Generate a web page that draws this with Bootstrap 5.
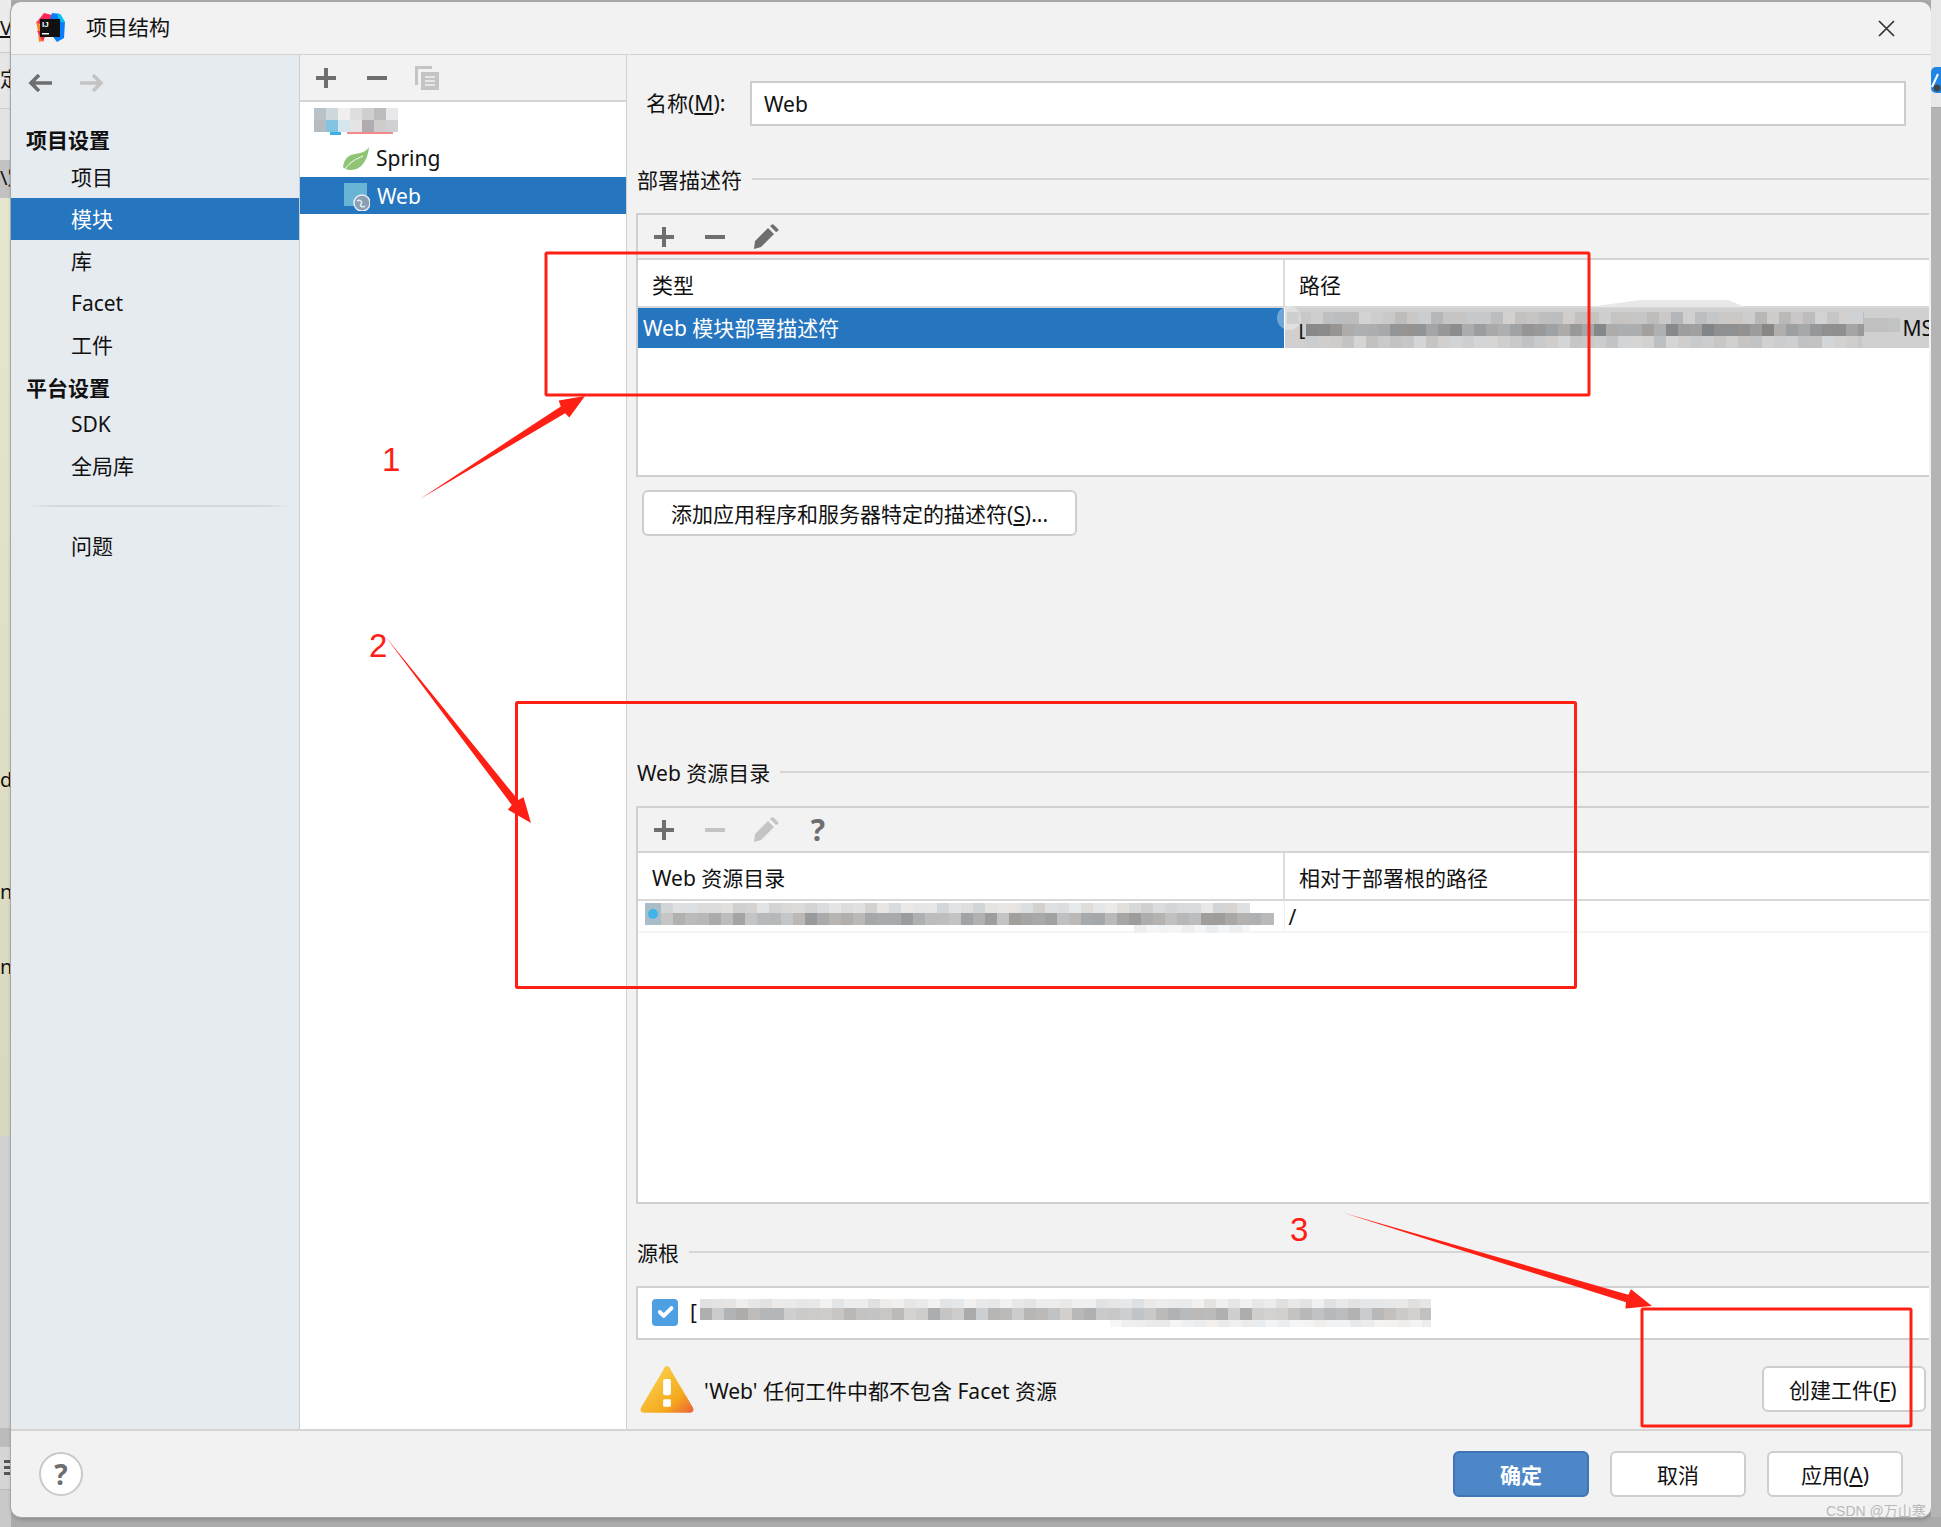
<!DOCTYPE html>
<html lang="zh-CN">

<head>
    <meta charset="UTF-8">
    <meta name="viewport" content="width=device-width, initial-scale=1.0">
    <title>项目结构</title>
    <link href="https://cdn.jsdelivr.net/npm/bootstrap@5.3.0/dist/css/bootstrap.min.css" rel="stylesheet">
    <style>
        body { margin: 0; overflow: hidden; background: #ababab; color: #111; font: 21px/1.3 "Noto Sans", "Noto Sans CJK SC", sans-serif; }
        .stage { width: 1941px; height: 1527px; overflow: hidden; position: relative; }

        /* the windows behind the dialog */
        .back-left { width: 11px; height: 1527px; overflow: hidden; white-space: nowrap; line-height: 28px; font-size: 20px; }
        .back-left > div { overflow: hidden; }
        .bl-a { height: 53px; background: #ececec; border-bottom: 1px solid #c9c9c9; padding-top: 14px; }
        .bl-b { height: 56px; background: #e6e6e6; border-bottom: 1px solid #cfcfcf; padding-top: 13px; }
        .bl-c { height: 51px; background: #e4e4e4; }
        .bl-d { height: 38px; background: #c2c2c2; padding-top: 4px; }
        .bl-e { height: 938px; background: linear-gradient(#e7e7cf, #d8d8be); padding-top: 568px; }
        .bl-e span { display: block; height: 28px; }
        .bl-e .gap1 { margin-top: 84px; }
        .bl-e .gap2 { margin-top: 47px; }
        .bl-f { height: 292px; background: #d2d2d2; }
        .bl-g { height: 19px; background: #bcbcbc; }
        .bl-h { height: 43px; background: #d6d6d6; border-bottom: 1px solid #b9b9b9; padding: 13px 0 0 4px; }
        .bl-h i { display: block; width: 7px; height: 16px; background: repeating-linear-gradient(#555 0 3px, transparent 3px 6px); }
        .bl-i { height: 37px; background: #c9c9c9; }
        .back-right { width: 10px; }
        .br-a { height: 108px; background: #e8e8e8; border-bottom: 1px solid #a9a9a9; padding-top: 67px; }
        .br-b { height: 1409px; background: #b4b4b4; }

        .dlg { width: 1920px; height: 1515px; margin-top: 2px; background: #f2f2f2; border-radius: 10px; overflow: hidden; box-shadow: 0 0 0 1px #a6a6a6, 1px 2px 5px rgba(0, 0, 0, .25); }
        .title-bar { height: 53px; border-bottom: 1px solid #d3d3d3; padding-left: 24px; }
        .title-bar .title-text { margin-left: 21px; }
        .close-x { margin-left: auto; margin-right: 36px; }
        .main-area { height: 1374px; }

        .side-col { width: 289px; background: #e6ebf0; border-right: 1px solid #c9ced3; }
        .nav-row { height: 56px; padding-left: 17px; gap: 28px; }
        .set-head { height: 36px; margin-top: 11px; margin-bottom: -2px; padding-left: 15px; font-weight: 700; line-height: 36px; color: #111; }
        .set-head.second { margin-top: 4px; margin-bottom: -3px; }
        .nav-pills .set-item { height: 42px; padding: 0 0 0 60px; line-height: 42px; color: #111; border-radius: 0; }
        .nav-pills .set-item.active { background: #2675bf; color: #fff; }
        .side-rule { height: 2px; margin: 18px 6px 18px 14px; background: linear-gradient(90deg, #e6ebf0, #d5d7da 12%, #d5d7da 88%, #e6ebf0); }

        .tree-col { width: 327px; background: #fff; border-right: 1px solid #cfcfcf; }
        .tree-tools { height: 47px; background: #f2f2f2; border-bottom: 2px solid #d4d4d4; padding-left: 16px; gap: 31px; }
        .tree-tools .copy-icon { margin-left: -3px; }
        .tree-blank { height: 41px; }
        .tree-row { height: 34px; padding: 0 0 2px 43px; gap: 7px; }
        .tree-row.web-row { height: 37px; padding: 2px 0 0 44px; background: #2675bf; color: #fff; }

        .form-col { width: 1304px; padding: 0 2px 0 10px; }
        .name-row { margin: 26px 22px 0 9px; gap: 20px; }
        .name-row label { flex: none; width: 84px; white-space: nowrap; }
        .name-row .form-control { height: 45px; width: 1156px; flex: none; border: 2px solid #cdcdcd; border-radius: 0; padding: 0 12px; font: inherit; color: #111; }
        .sec-title { height: 30px; line-height: 30px; gap: 10px; }
        .sec-title hr { flex: 1; margin: -2px 0 0; border: 0; border-top: 2px solid #d6d6d6; opacity: 1; }
        .sec-one { margin-top: 39px; }
        .sec-two { margin-top: 222px; }
        .sec-three { margin-top: 34px; }

        .desc-box { margin: 18px 0 0 -1px; background: #fff; border: 2px solid #d0d0d0; border-right: 0; }
        .box-one { height: 264px; }
        .box-two { height: 398px; }
        .box-tools { height: 45px; background: #f2f2f2; border-bottom: 2px solid #d4d4d4; padding-left: 16px; gap: 31px; }
        .box-tools .edit-icon { margin-left: -3px; }
        .box-tools .ask { width: 20px; margin-left: -2px; font-weight: 700; font-size: 30px; line-height: 1; color: #6e6e6e; text-align: center; }

        .res-table { table-layout: fixed; width: 1291px; margin: 0; --bs-table-bg: transparent; color: inherit; }
        .res-table th, .res-table td { border: 0; padding: 0; font-weight: 400; vertical-align: middle; white-space: nowrap; overflow: hidden; box-shadow: none; }
        .res-table th { height: 47px; padding: 5px 0 0 14px; border-bottom: 2px solid #d8d8d8; }
        .res-table th + th { padding-left: 14px; border-left: 2px solid #dcdcdc; }
        .res-table .pick { height: 41px; padding: 2px 0 0 5px; background: #2675bf; color: #fff; border-right: 1px solid #fff; }
        .res-table .pick-path { background: #d0d0d0; padding: 2px 0 0 14px; }
        .res-table .path-end { margin-right: -4px; }
        .res-table .dir-row { height: 29px; border-bottom: 2px solid #f5f5f5; }
        .res-table .dir-slash { padding: 3px 0 0 4px; border-left: 1px solid #efefef; }

        .ide-btn { display: block; padding: 3px 0 0; background: #fff; border: 2px solid #cecece; border-radius: 6px; color: #111; font: inherit; }
        .ide-btn:hover { background: #fff; border-color: #cecece; color: #111; }
        .add-btn { width: 435px; height: 46px; margin: 13px 0 0 5px; }
        .src-box { height: 54px; margin: 18px 0 0 -1px; padding-left: 13px; gap: 12px; background: #fff; border: 2px solid #d0d0d0; border-right: 0; }
        .src-box .form-check-input { width: 26px; height: 27px; margin: -2px 0 0 1px; border: 0; border-radius: 4px; opacity: 1; }
        .src-box .form-check-input:checked { background-color: #4f9fe3; }
        .warn-row { margin-top: 26px; height: 46px; padding: 0 3px 0 3px; }
        .warn-row .warn-text { margin-left: 10px; padding-top: 6px; }
        .warn-row .ide-btn { margin-left: auto; width: 164px; height: 46px; padding-left: 25px; text-align: left; }

        .foot-row { height: 88px; border-top: 2px solid #d4d4d4; padding: 20px 28px 0 28px; gap: 21px; align-items: flex-start; }
        .help-btn { width: 44px; height: 44px; padding: 0; margin-top: 1px; margin-right: auto; background: #fff; border: 2px solid #c9c9c9; color: #6e6e6e; font-weight: 700; font-size: 28px; line-height: 1; }
        .help-btn:hover { background: #fff; border-color: #c9c9c9; color: #6e6e6e; }
        .foot-btn { width: 136px; height: 46px; }
        .ok-btn { background: #4e87c7; border-color: #3f74b5; color: #fff; font-weight: 700; }
        .ok-btn:hover { background: #4e87c7; border-color: #3f74b5; color: #fff; }

        .marks { position: absolute; left: 0; top: 0; pointer-events: none; }
        .marks text { font-family: "Liberation Sans", sans-serif; }
    </style>
</head>

<body>
    <div class="stage d-flex">
        <div class="back-left">
            <div class="bl-a"><u>V</u></div>
            <div class="bl-b">定</div>
            <div class="bl-c"></div>
            <div class="bl-d">\定</div>
            <div class="bl-e"><span>d.</span><span class="gap1">nl</span><span class="gap2">n</span></div>
            <div class="bl-f"></div>
            <div class="bl-g"></div>
            <div class="bl-h"><i></i></div>
            <div class="bl-i"></div>
        </div>

        <div class="dlg d-flex flex-column">
            <div class="title-bar d-flex align-items-center">
                <svg width="30" height="30" viewBox="0 0 30 30">
                    <polygon points="9,0 17,2 14,14 1,10" fill="#fe2857" />
                    <polygon points="1,8 9,16 8,28 4,29 3,18" fill="#fc801d" />
                    <polygon points="2,18 12,18 8,29" fill="#fe2857" />
                    <polygon points="17,0 25,1 30,9 29,25 22,29 12,16" fill="#087cfa" />
                    <polygon points="22,0 26,2 30,10 24,8" fill="#07c3f2" />
                    <rect x="5" y="6" width="20" height="18" fill="#111" />
                    <text x="7" y="14" font-size="8" font-weight="700" fill="#fff" font-family="Liberation Sans">IJ</text>
                    <rect x="7" y="20" width="7" height="1.5" fill="#fff" />
                </svg>
                <span class="title-text">项目结构</span>
                <svg class="close-x" width="17" height="17" viewBox="0 0 17 17"><path d="M1 1l15 15M16 1L1 16" stroke="#333" stroke-width="1.7" fill="none" /></svg>
            </div>

            <div class="main-area d-flex">
                <div class="side-col">
                    <div class="nav-row d-flex align-items-center">
                        <svg width="24" height="18" viewBox="0 0 24 18"><path d="M24 9H3M11 1L3 9l8 8" stroke="#6e6e6e" stroke-width="3.6" fill="none" /></svg>
                        <svg width="25" height="18" viewBox="0 0 25 18"><path d="M0 9h21M13 1l8 8-8 8" stroke="#c4c4c4" stroke-width="3.6" fill="none" /></svg>
                    </div>
                    <div class="set-head">项目设置</div>
                    <nav class="nav nav-pills flex-column">
                        <a class="nav-link set-item" href="#">项目</a>
                        <a class="nav-link set-item active" href="#">模块</a>
                        <a class="nav-link set-item" href="#">库</a>
                        <a class="nav-link set-item" href="#">Facet</a>
                        <a class="nav-link set-item" href="#">工件</a>
                    </nav>
                    <div class="set-head second">平台设置</div>
                    <nav class="nav nav-pills flex-column">
                        <a class="nav-link set-item" href="#">SDK</a>
                        <a class="nav-link set-item" href="#">全局库</a>
                    </nav>
                    <div class="side-rule"></div>
                    <nav class="nav nav-pills flex-column">
                        <a class="nav-link set-item" href="#">问题</a>
                    </nav>
                </div>

                <div class="tree-col">
                    <div class="tree-tools d-flex align-items-center">
                        <svg width="20" height="20" viewBox="0 0 20 20"><path d="M10 0v20M0 10h20" stroke="#6e6e6e" stroke-width="4" /></svg>
                        <svg width="20" height="20" viewBox="0 0 20 20"><path d="M0 10h20" stroke="#6e6e6e" stroke-width="4" /></svg>
                        <svg class="copy-icon" width="24" height="24" viewBox="0 0 24 24"><path d="M0 0h17v3H3v16H0z" fill="#c4c4c4" /><path d="M6 6h18v18H6z" fill="#c4c4c4" /><path d="M10 11h10M10 15h10M10 19h10" stroke="#f2f2f2" stroke-width="1.6" /></svg>
                    </div>
                    <div class="tree-blank"></div>
                    <div class="tree-row d-flex align-items-center">
                        <svg width="26" height="24" viewBox="0 0 26 24"><path d="M26 0C25 12 19 23 8 23 4 23 1 22 0 20 1 12 5 8 12 7 18 6 23 5 26 0z" fill="#8fc475" /><path d="M2 22C7 15 13 12 20 9" stroke="#fff" stroke-width="1" fill="none" /></svg>
                        <span>Spring</span>
                    </div>
                    <div class="tree-row web-row d-flex align-items-center">
                        <svg width="26" height="28" viewBox="0 0 26 28"><rect x="0" y="0" width="23" height="23" fill="#67b4d4" /><circle cx="18" cy="20" r="8" fill="#8a9fb5" stroke="#e9eef3" stroke-width="1.5" /><path d="M13 18c3-2 6 1 4 3s2 4 4 2" stroke="#e9eef3" stroke-width="1.4" fill="none" /></svg>
                        <span>Web</span>
                    </div>
                </div>

                <div class="form-col">
                    <div class="name-row d-flex align-items-center">
                        <label for="module-name">名称(<u>M</u>):</label>
                        <input id="module-name" class="form-control" type="text" value="Web">
                    </div>

                    <div class="sec-title sec-one d-flex align-items-center"><span>部署描述符</span><hr></div>
                    <div class="desc-box box-one">
                        <div class="box-tools d-flex align-items-center">
                            <svg width="20" height="20" viewBox="0 0 20 20"><path d="M10 0v20M0 10h20" stroke="#6e6e6e" stroke-width="4" /></svg>
                            <svg width="20" height="20" viewBox="0 0 20 20"><path d="M0 10h20" stroke="#6e6e6e" stroke-width="4" /></svg>
                            <svg class="edit-icon" width="26" height="25" viewBox="0 0 26 25"><path d="M1 25l1-8L15 4l6 6L8 23zM17 2l2-1.500q1-.5 2 .5l4 4q1 1 0 2l-2 1z" fill="#6e6e6e" /></svg>
                        </div>
                        <table class="table res-table">
                            <colgroup><col style="width: 646px"><col></colgroup>
                            <thead><tr><th>类型</th><th>路径</th></tr></thead>
                            <tbody>
                                <tr>
                                    <td class="pick">Web 模块部署描述符</td>
                                    <td class="pick-path"><div class="d-flex justify-content-between"><span>[</span><span class="path-end">MS</span></div></td>
                                </tr>
                            </tbody>
                        </table>
                    </div>
                    <button type="button" class="btn ide-btn add-btn">添加应用程序和服务器特定的描述符(<u>S</u>)...</button>

                    <div class="sec-title sec-two d-flex align-items-center"><span>Web 资源目录</span><hr></div>
                    <div class="desc-box box-two">
                        <div class="box-tools d-flex align-items-center">
                            <svg width="20" height="20" viewBox="0 0 20 20"><path d="M10 0v20M0 10h20" stroke="#6e6e6e" stroke-width="4" /></svg>
                            <svg width="20" height="20" viewBox="0 0 20 20"><path d="M0 10h20" stroke="#c4c4c4" stroke-width="4" /></svg>
                            <svg class="edit-icon" width="26" height="25" viewBox="0 0 26 25"><path d="M1 25l1-8L15 4l6 6L8 23zM17 2l2-1.500q1-.5 2 .5l4 4q1 1 0 2l-2 1z" fill="#c4c4c4" /></svg>
                            <span class="ask">?</span>
                        </div>
                        <table class="table res-table">
                            <colgroup><col style="width: 646px"><col></colgroup>
                            <thead><tr><th>Web 资源目录</th><th>相对于部署根的路径</th></tr></thead>
                            <tbody>
                                <tr class="dir-row"><td></td><td class="dir-slash">/</td></tr>
                            </tbody>
                        </table>
                    </div>

                    <div class="sec-title sec-three d-flex align-items-center"><span>源根</span><hr></div>
                    <div class="src-box d-flex align-items-center">
                        <input class="form-check-input" type="checkbox" checked aria-label="源根">
                        <span>[</span>
                    </div>
                    <div class="warn-row d-flex align-items-center">
                        <svg width="54" height="49" viewBox="0 0 56 50">
                            <defs><linearGradient id="warnFill" x1="0" y1="0" x2="1" y2="1"><stop offset="0" stop-color="#fbdc5a" /><stop offset=".7" stop-color="#f4a81c" /><stop offset="1" stop-color="#ec5f3c" /></linearGradient></defs>
                            <path d="M28 1c2 0 3 1 4 4l23 39c1 3 0 5-3 5H4c-3 0-4-2-3-5L24 5c1-3 2-4 4-4z" fill="url(#warnFill)" />
                            <rect x="24" y="14" width="8" height="17" rx="2" fill="#fff" />
                            <rect x="24" y="35" width="8" height="8" rx="1.500" fill="#fff" />
                        </svg>
                        <span class="warn-text">'Web' 任何工件中都不包含 Facet 资源</span>
                        <button type="button" class="btn ide-btn">创建工件(<u>F</u>)</button>
                    </div>
                </div>
            </div>

            <div class="foot-row d-flex">
                <button type="button" class="btn rounded-circle help-btn">?</button>
                <button type="button" class="btn ide-btn foot-btn ok-btn">确定</button>
                <button type="button" class="btn ide-btn foot-btn">取消</button>
                <button type="button" class="btn ide-btn foot-btn">应用(<u>A</u>)</button>
            </div>
        </div>

        <div class="back-right">
            <div class="br-a">
                <svg class="d-block" width="10" height="26" viewBox="0 0 10 26"><rect x="0" y="0" width="16" height="26" rx="5" fill="#1f86e6" /><path d="M1 20l6-13" stroke="#fff" stroke-width="2" /><circle cx="6" cy="21" r="3.5" fill="#444" /></svg>
            </div>
            <div class="br-b"></div>
        </div>

        <!-- redaction mosaics and the red review marks sit on top of the dialog -->
        <svg class="marks" id="marks" width="1941" height="1527" viewBox="0 0 1941 1527">
            <g id="mosaics"></g>
            <g fill="none" stroke="#ff2015" stroke-width="3">
                <rect x="546" y="253" width="1043" height="142" rx="1" />
                <rect x="516.500" y="702.500" width="1059" height="285" rx="1" />
                <rect x="1642" y="1309" width="269" height="117" rx="1" />
            </g>
            <g id="arrows" fill="#ff2015"></g>
            <g fill="#ff2015" font-size="33">
                <text x="382" y="471">1</text>
                <text x="369" y="657">2</text>
                <text x="1290" y="1241">3</text>
            </g>
            <text x="1826" y="1516" font-size="14" fill="#b9b9b9" style="font-family: 'Liberation Sans', 'Noto Sans CJK SC', sans-serif">CSDN @万山寒</text>
        </svg>
    </div>

    <script src="https://cdn.jsdelivr.net/npm/bootstrap@5.3.0/dist/js/bootstrap.bundle.min.js"></script>
    <script>
        const NS = 'http://www.w3.org/2000/svg';
        let seed = 71;

        function rnd() {
            seed = (seed * 16807) % 2147483647;
            return seed / 2147483647;
        }

        function shape(parent, tag, attrs) {
            const el = document.createElementNS(NS, tag);
            Object.keys(attrs).forEach(k => el.setAttribute(k, attrs[k]));
            parent.appendChild(el);
            return el;
        }

        // one band of blur cells: gray level is base +/- spread
        function band(x1, x2, y, h, base, spread) {
            const g = document.getElementById('mosaics');
            for (let x = x1; x < x2; x += 12) {
                const v = Math.round(base + (rnd() - 0.5) * spread);
                const tint = Math.round((rnd() - 0.5) * 6);
                shape(g, 'rect', {
                    x: x, y: y, width: Math.min(12, x2 - x), height: h,
                    fill: `rgb(${v + tint},${v},${v - tint})`
                });
            }
        }

        // module name in the tree was blurred by hand, colours read off the picture
        function treeBlur() {
            const g = document.getElementById('mosaics');
            shape(g, 'rect', { x: 330, y: 130, width: 11, height: 5, fill: '#3eb0e6' });
            shape(g, 'rect', { x: 347, y: 132, width: 46, height: 2, fill: '#f28a8a' });
            const rows = [
                ['#b9c2c8', '#cfd8dc', '#f0efee', '#dedede', '#cfcfcf', '#bdbcbd', '#e8e8ea'],
                ['#b4bcc2', '#82c4e2', '#d6e6ee', '#e4e4e4', '#b0abaf', '#d0cccc', '#cfd0d4']
            ];
            rows.forEach((row, r) => row.forEach((c, i) => {
                shape(g, 'rect', { x: 314 + i * 12, y: 108 + r * 12, width: 12, height: 12, fill: c });
            }));
        }

        function pathBlur() {
            const g = document.getElementById('mosaics');
            shape(g, 'polygon', { points: '1589,307 1640,300 1728,300 1745,307', fill: '#e8e8e8' });
            band(1287, 1864, 312, 12, 196, 30);
            band(1306, 1864, 324, 12, 154, 44);
            band(1306, 1862, 336, 12, 203, 24);
            band(1864, 1900, 318, 14, 188, 22);
            shape(g, 'circle', { cx: 1289, cy: 318, r: 12, fill: '#fff', opacity: 0.35 });
        }

        function webDirBlur() {
            const g = document.getElementById('mosaics');
            shape(g, 'rect', { x: 645, y: 903, width: 16, height: 22, fill: '#a9bdc9' });
            shape(g, 'circle', { cx: 653, cy: 914, r: 5, fill: '#3eb4ea' });
            band(661, 1250, 903, 10, 222, 28);
            band(661, 1274, 913, 12, 176, 46);
            band(1134, 1250, 925, 8, 240, 14);
        }

        function sourceBlur() {
            band(700, 1431, 1299, 9, 232, 20);
            band(700, 1431, 1308, 12, 190, 40);
            band(1110, 1431, 1320, 7, 240, 12);
        }

        // tapered annotation arrow, thin tail growing into the head
        function arrow(x1, y1, x2, y2, shaft, head, len) {
            const d = Math.hypot(x2 - x1, y2 - y1);
            const ux = (x2 - x1) / d, uy = (y2 - y1) / d;
            const nx = -uy, ny = ux;
            const bx = x2 - ux * len, by = y2 - uy * len;
            const neckx = x2 - ux * len * 0.8, necky = y2 - uy * len * 0.8;
            const pts = [
                [x1, y1],
                [bx + nx * shaft, by + ny * shaft],
                [neckx + nx * head - ux * 4, necky + ny * head - uy * 4],
                [x2, y2],
                [neckx - nx * head - ux * 4, necky - ny * head - uy * 4],
                [bx - nx * shaft, by - ny * shaft]
            ];
            shape(document.getElementById('arrows'), 'polygon', {
                points: pts.map(p => p.map(v => v.toFixed(1)).join(',')).join(' ')
            });
        }

        treeBlur();
        pathBlur();
        webDirBlur();
        sourceBlur();
        arrow(420, 499, 585, 396, 4, 10, 26);
        arrow(385, 636, 531, 823, 4, 10, 26);
        arrow(1344, 1213, 1652, 1306, 4, 10, 26);
    </script>
</body>

</html>
